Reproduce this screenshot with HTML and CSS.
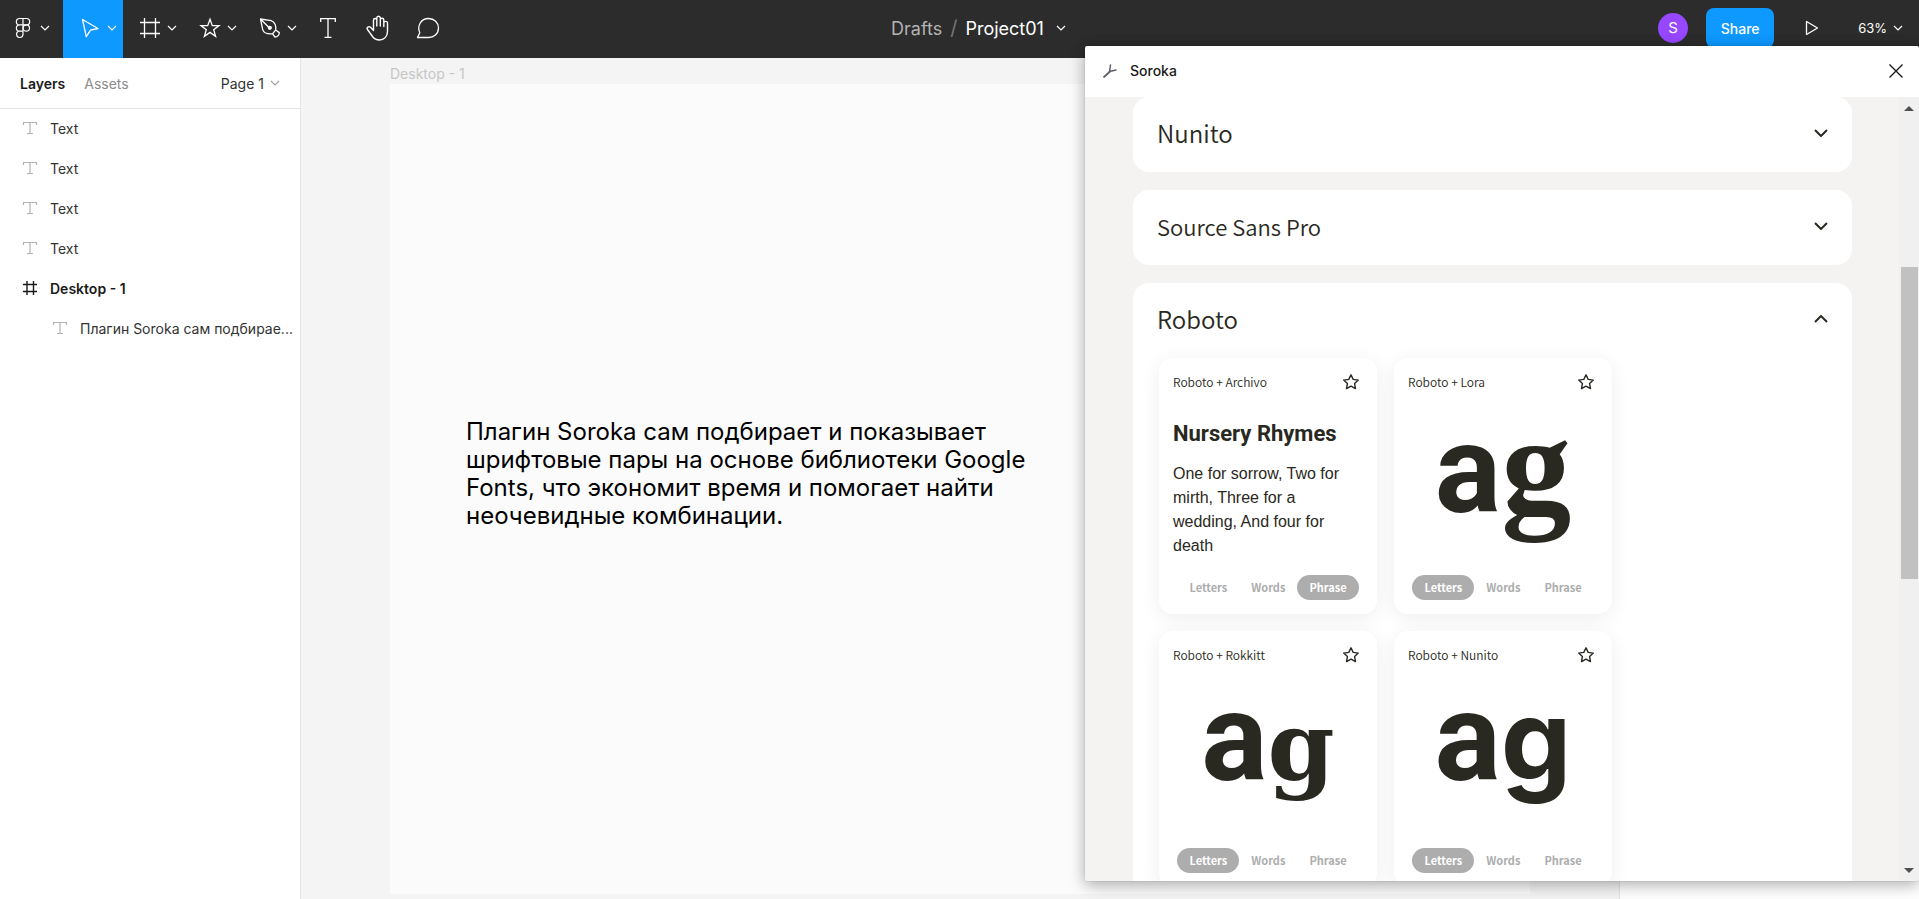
FILE: index.html
```html
<!DOCTYPE html>
<html lang="ru">
<head>
<meta charset="utf-8">
<title>Project01</title>
<link rel="stylesheet" href="styles.css">
</head>
<body>
<svg class="defs" aria-hidden="true">
  <symbol id="chev" viewBox="0 0 10 6"><path d="M1 1l4 4 4-4" fill="none" stroke="currentColor" stroke-width="1.2"/></symbol>
  <symbol id="chev-bold" viewBox="0 0 14 8"><path d="M1 1l6 6 6-6" fill="none" stroke="currentColor" stroke-width="2"/></symbol>
  <symbol id="type" viewBox="0 0 16 14"><path d="M1.500 4V1.500h13V4M8 1.500v11M5 12.500h6" fill="none" stroke="currentColor" stroke-width="1.200"/></symbol>
  <symbol id="star" viewBox="0 0 18 18"><path d="M9 1.800l2.200 4.600 5.100.7-3.700 3.500.9 5L9 13.200l-4.500 2.400.9-5-3.700-3.500 5.100-.7z" fill="none" stroke="currentColor" stroke-width="1.400" stroke-linejoin="round"/></symbol>
</svg>

<header class="toolbar">
  <nav class="tools">
    <button class="tool tool-menu" aria-label="Menu">
      <span class="tool-icon"><svg width="16" height="22" viewBox="0 0 16 22" fill="none" stroke="currentColor" stroke-width="1.200"><path d="M8 1.500H4.500a3.100 3.100 0 0 0 0 6.300H8zM8 1.500h3.500a3.100 3.100 0 0 1 0 6.300H8zM8 7.800H4.500a3.100 3.100 0 0 0 0 6.300H8zM8 14.100H4.500a3.200 3.200 0 1 0 3.500 3.200z"/><circle cx="11.300" cy="11" r="3.200"/></svg></span>
      <span class="tool-chev"><svg width="10" height="6"><use href="#chev"/></svg></span>
    </button>
    <button class="tool tool-active" aria-label="Move">
      <span class="tool-icon"><svg width="20" height="22" viewBox="0 0 20 22" fill="none" stroke="currentColor" stroke-width="1.300" stroke-linejoin="round"><path d="M2.500 2.500l15.500 9-7.500 1.700-4.200 6.500z"/></svg></span>
      <span class="tool-chev"><svg width="10" height="6"><use href="#chev"/></svg></span>
    </button>
    <button class="tool" aria-label="Frame">
      <span class="tool-icon"><svg width="22" height="22" viewBox="0 0 22 22" fill="none" stroke="currentColor" stroke-width="1.300"><path d="M5.500 1v20M16.500 1v20M1 5.500h20M1 16.500h20"/></svg></span>
      <span class="tool-chev"><svg width="10" height="6"><use href="#chev"/></svg></span>
    </button>
    <button class="tool" aria-label="Shape">
      <span class="tool-icon"><svg width="22" height="22" viewBox="0 0 22 22" fill="none" stroke="currentColor" stroke-width="1.300"><path d="M11 2.200l2.300 6.400h6.700l-5.300 4.100 1.900 6.600-5.600-3.900-5.600 3.900 1.900-6.600L2 8.600h6.700z"/></svg></span>
      <span class="tool-chev"><svg width="10" height="6"><use href="#chev"/></svg></span>
    </button>
    <button class="tool" aria-label="Pen">
      <span class="tool-icon"><svg width="22" height="22" viewBox="0 0 22 22" fill="none" stroke="currentColor" stroke-width="1.300" stroke-linejoin="round"><path d="M1.500 2l10.700 1.700c3.600 1 5.200 5.600 4.500 9.300l3.600 2.600c.3 2.200-1.900 4.300-4.300 4.400l-2.500-3.200c-4.200.4-8.600-.6-9.800-4.200zM1.500 2l8.500 8.500M16.700 13l-3.200 3.800"/><circle cx="10.800" cy="10.800" r="1.500" fill="currentColor"/></svg></span>
      <span class="tool-chev"><svg width="10" height="6"><use href="#chev"/></svg></span>
    </button>
    <button class="tool-single" aria-label="Text"><svg width="18" height="22" viewBox="0 0 18 22" fill="none" stroke="currentColor" stroke-width="1.300"><path d="M1.700 5V1.700h14.600V5M9 1.700v18.600M5.500 20.300h7"/></svg></button>
    <button class="tool-single" aria-label="Hand"><svg width="24" height="26" viewBox="0 0 24 26" fill="none" stroke="currentColor" stroke-width="1.400" stroke-linejoin="round" stroke-linecap="round"><path d="M7.500 13.500V5.200c0-2.300 3.300-2.300 3.300 0V3c0-2.400 3.500-2.400 3.500 0v2c0-2.300 3.500-2.300 3.500 0v3c0-2.200 3.700-2.200 3.700 0v8.500c0 5-3.500 8.500-8 8.500-3.300 0-5.500-1.500-7-3.500l-5-7c-1.300-2 1.500-3.800 3-2.200l3 3.200zM10.800 5v6M14.300 5v6M17.800 7v4.500"/></svg></button>
    <button class="tool-single" aria-label="Comment"><svg width="24" height="22" viewBox="0 0 24 22" fill="none" stroke="currentColor" stroke-width="1.300" stroke-linejoin="round"><path d="M1.500 20.500l2.300-4.800C.9 9.500 4.500 1.500 12.700 1.500c5.500 0 9.800 4.200 9.800 9.500 0 6-5 9.500-9.800 9.500z"/></svg></button>
  </nav>
  <div class="doc-title">
    <a class="doc-folder" href="#">Drafts</a>
    <span class="doc-slash">/</span>
    <button class="doc-name">Project01 <svg width="10" height="6"><use href="#chev"/></svg></button>
  </div>
  <div class="actions">
    <span class="avatar">S</span>
    <button class="share">Share</button>
    <button class="play" aria-label="Present"><svg width="14" height="16" viewBox="0 0 14 16" fill="none" stroke="currentColor" stroke-width="1.300" stroke-linejoin="round"><path d="M1.500 1.500l11 6.500-11 6.500z"/></svg></button>
    <button class="zoom">63% <svg width="10" height="6"><use href="#chev"/></svg></button>
  </div>
</header>

<main class="workspace">
  <aside class="left-panel">
    <div class="tabs">
      <button class="tab tab-on">Layers</button>
      <button class="tab">Assets</button>
      <button class="page">Page 1 <svg width="10" height="6"><use href="#chev"/></svg></button>
    </div>
    <ul class="layers">
      <li><svg width="16" height="14"><use href="#type"/></svg><span>Text</span></li>
      <li><svg width="16" height="14"><use href="#type"/></svg><span>Text</span></li>
      <li><svg width="16" height="14"><use href="#type"/></svg><span>Text</span></li>
      <li><svg width="16" height="14"><use href="#type"/></svg><span>Text</span></li>
      <li class="frame-layer"><svg width="16" height="14" viewBox="0 0 16 14" fill="none" stroke="currentColor" stroke-width="1.400"><path d="M5 0v14M11.500 0v14M1 3.500h14M1 10.500h14"/></svg><span>Desktop - 1</span></li>
      <li class="nested"><svg width="16" height="14"><use href="#type"/></svg><span>Плагин Soroka сам подбирае...</span></li>
    </ul>
  </aside>
  <section class="canvas">
    <div class="frame-name">Desktop - 1</div>
    <div class="frame">
      <p>Плагин Soroka сам подбирает и показывает<br>шрифтовые пары на основе библиотеки Google<br>Fonts, что экономит время и помогает найти<br>неочевидные комбинации.</p>
    </div>
  </section>
  <aside class="right-panel"></aside>
</main>

<section class="plugin" role="dialog" aria-label="Soroka">
  <header class="plugin-head">
    <svg width="16" height="16" viewBox="0 0 16 16" fill="none" stroke="#625e6e" stroke-linecap="round"><path d="M2 14l6-5.500" stroke-width="1.800"/><path d="M7.500 8.500l1-6.500M7.500 8.500l6.500-1.500" stroke-width="1.500"/></svg>
    <h1>Soroka</h1>
    <button class="close" aria-label="Close"><svg width="16" height="16" viewBox="0 0 16 16"><path d="M1.500 1.500l13 13M14.500 1.500l-13 13" stroke="currentColor" stroke-width="1.400"/></svg></button>
  </header>
  <div class="plugin-body">
    <div class="fonts">
      <article class="font"><button class="font-head">Nunito <svg width="14" height="8"><use href="#chev-bold"/></svg></button></article>
      <article class="font"><button class="font-head font-source">Source Sans Pro <svg width="14" height="8"><use href="#chev-bold"/></svg></button></article>
      <article class="font">
        <button class="font-head">Roboto <svg width="14" height="8" viewBox="0 0 14 8"><path d="M1 7l6-6 6 6" fill="none" stroke="currentColor" stroke-width="2"/></svg></button>
        <div class="pairs">
          <div class="pair">
            <div class="pair-head"><h2>Roboto + Archivo</h2><button class="fav" aria-label="Favourite"><svg width="18" height="18"><use href="#star"/></svg></button></div>
            <div class="phrase"><h3>Nursery Rhymes</h3><p>One for sorrow, Two for mirth, Three for a wedding, And four for death</p></div>
            <div class="modes"><button>Letters</button><button>Words</button><button class="on">Phrase</button></div>
          </div>
          <div class="pair">
            <div class="pair-head"><h2>Roboto + Lora</h2><button class="fav" aria-label="Favourite"><svg width="18" height="18"><use href="#star"/></svg></button></div>
            <div class="letters">a<span class="lora">g</span></div>
            <div class="modes"><button class="on">Letters</button><button>Words</button><button>Phrase</button></div>
          </div>
          <div class="pair">
            <div class="pair-head"><h2>Roboto + Rokkitt</h2><button class="fav" aria-label="Favourite"><svg width="18" height="18"><use href="#star"/></svg></button></div>
            <div class="letters">a<span class="rokkitt">g</span></div>
            <div class="modes"><button class="on">Letters</button><button>Words</button><button>Phrase</button></div>
          </div>
          <div class="pair">
            <div class="pair-head"><h2>Roboto + Nunito</h2><button class="fav" aria-label="Favourite"><svg width="18" height="18"><use href="#star"/></svg></button></div>
            <div class="letters">a<span class="nunito">g</span></div>
            <div class="modes"><button class="on">Letters</button><button>Words</button><button>Phrase</button></div>
          </div>
        </div>
      </article>
    </div>
    <div class="scrollbar">
      <svg width="10" height="5" viewBox="0 0 10 5"><path d="M0 5l5-5 5 5z" fill="#505050"/></svg>
      <div class="track"><div class="thumb"></div></div>
      <svg width="10" height="5" viewBox="0 0 10 5"><path d="M0 0l5 5 5-5z" fill="#505050"/></svg>
    </div>
  </div>
</section>
</body>
</html>
```
FILE: styles.css
```css
* { box-sizing: border-box; }
body {
  margin: 0;
  height: 100vh;
  display: flex;
  flex-direction: column;
  position: relative;
  overflow: hidden;
  font-family: Inter, sans-serif;
  font-size: 14px;
  color: #333;
}
button {
  border: 0;
  padding: 0;
  background: none;
  font: inherit;
  color: inherit;
}
h1, h2, h3, p, ul { margin: 0; padding: 0; }
svg { display: block; flex: none; }
.defs { position: absolute; width: 0; height: 0; }

/* Toolbar */
.toolbar {
  display: flex;
  flex: none;
  height: 58px;
  padding-bottom: 2px;
  background: #2c2c2c;
  color: #fff;
}
.tools { display: flex; flex: 1 1 0; margin-bottom: -2px; }
.tool {
  display: flex;
  align-items: center;
  width: 60px;
  padding: 0 0 2px 14px;
}
.tool-menu { width: 63px; padding-left: 10px; }
.tool-active { background: #0d99ff; }
.tool-icon { display: flex; justify-content: center; width: 26px; }
.tool-chev { display: flex; justify-content: center; width: 18px; }
.tool-single {
  display: flex;
  align-items: center;
  justify-content: center;
  width: 50px;
  padding-bottom: 2px;
}
.doc-title {
  display: flex;
  align-items: center;
  gap: 8px;
  padding-left: 54px;
  font-size: 18px;
}
.doc-folder { color: #b3b3b3; text-decoration: none; }
.doc-slash { color: #777; font-size: 20px; }
.doc-name { display: flex; align-items: center; gap: 12px; }
.actions {
  display: flex;
  flex: 1 1 0;
  justify-content: flex-end;
  align-items: center;
  padding-right: 16px;
}
.avatar {
  width: 30px;
  height: 30px;
  margin-right: 18px;
  border-radius: 50%;
  background: #9747ff;
  font-size: 15px;
  line-height: 30px;
  text-align: center;
}
.share {
  width: 68px;
  height: 40px;
  border-radius: 8px;
  background: #0d99ff;
  font-size: 14px;
  font-weight: 500;
}
.play { margin: 0 39px 0 31px; }
.zoom { display: flex; align-items: center; gap: 6px; font-size: 13px; }

/* Workspace */
.workspace { display: flex; flex: 1; min-height: 0; }
.left-panel {
  flex: none;
  width: 301px;
  border-right: 1px solid #e5e5e5;
  background: #fff;
}
.tabs {
  display: flex;
  align-items: center;
  gap: 19px;
  height: 51px;
  padding: 0 20px;
  border-bottom: 1px solid #e5e5e5;
}
.tab { color: #8c8c8c; }
.tab-on { color: #1a1a1a; font-weight: 600; }
.page { display: flex; align-items: center; gap: 6px; margin-left: auto; }
.page svg { color: #a0a0a0; }
.layers { list-style: none; }
.layers li {
  display: flex;
  align-items: center;
  gap: 12px;
  height: 40px;
  padding: 0 4px 2px 22px;
}
.layers svg { color: #b3b3b3; }
.layers span { white-space: nowrap; }
.layers .frame-layer { font-weight: 600; color: #1a1a1a; }
.layers .frame-layer svg { color: #1a1a1a; }
.layers .nested { padding-left: 52px; }
.canvas {
  display: flex;
  flex-direction: column;
  flex: 1;
  padding: 7px 89px 5px;
  background: #f4f4f4;
}
.frame-name { height: 19px; color: #c6c6c6; line-height: 17px; }
.frame { flex: 1; padding: 334px 76px 0; background: #fbfbfb; }
.frame p { color: #000; font-size: 24px; line-height: 28px; white-space: nowrap; }
.right-panel { flex: none; width: 300px; border-left: 1px solid #e5e5e5; background: #fff; }

/* Plugin window */
.plugin {
  position: absolute;
  top: 46px;
  right: 0;
  bottom: 18px;
  display: flex;
  flex-direction: column;
  width: 834px;
  border-radius: 2px;
  background: #fff;
  box-shadow: 0 2px 14px rgba(0, 0, 0, .15), 0 0 1px rgba(0, 0, 0, .4), 0 5px 17px rgba(0, 0, 0, .2);
  overflow: hidden;
}
.plugin-head {
  display: flex;
  align-items: center;
  flex: none;
  gap: 12px;
  height: 51px;
  padding: 0 15px 2px 17px;
  color: #1a1a1a;
}
.plugin-head h1 { font-size: 14px; font-weight: 500; }
.close { margin-left: auto; }
.plugin-body { display: flex; flex: 1; min-height: 0; background: #f4f3f1; }
.fonts {
  display: flex;
  flex-direction: column;
  flex: 1;
  gap: 18px;
  padding: 0 47px 0 48px;
  overflow: hidden;
  color: #292821;
  font-family: "Noto Sans CJK SC", sans-serif;
}
.font { flex: none; border-radius: 16px; background: #fff; }
.font-head {
  display: flex;
  align-items: center;
  justify-content: space-between;
  width: 100%;
  height: 75px;
  padding: 0 24px 4px;
  font-size: 24px;
  font-weight: 350;
}
.font-source { font-size: 22px; }
.pairs {
  display: grid;
  grid-template-columns: 218px 218px;
  gap: 17px;
  padding: 0 26px 26px;
}
.pair {
  display: flex;
  flex-direction: column;
  height: 256px;
  padding: 14px;
  border-radius: 14px;
  background: #fff;
  box-shadow: 0 4px 20px rgba(0, 0, 0, .07);
}
.pair-head {
  display: flex;
  align-items: center;
  justify-content: space-between;
  height: 20px;
  padding-right: 3px;
}
.pair-head h2 { padding-bottom: 2px; font-size: 12px; font-weight: 350; }
.phrase { flex: 1; padding-top: 28px; }
.phrase h3 { font: 700 22px/28px Roboto, sans-serif; }
.phrase p { padding-top: 14px; font: 16px/24px "Liberation Sans", sans-serif; }
.letters {
  display: flex;
  flex: 1;
  align-items: baseline;
  justify-content: center;
  min-height: 0;
  font: 700 124px/146px Roboto, sans-serif;
}
.lora { font-family: "Liberation Serif", serif; font-size: 140px; }
.rokkitt { font-family: "DejaVu Serif", serif; font-size: 96px; }
.nunito { font-family: Inter, sans-serif; font-size: 112px; }
.modes { display: flex; justify-content: center; }
.modes button {
  height: 25px;
  padding: 0 12px;
  border-radius: 13px;
  color: #adadad;
  font-size: 11px;
  font-weight: 700;
  line-height: 25px;
}
.modes .on { background: #adadad; color: #fff; }
.scrollbar {
  display: flex;
  flex-direction: column;
  align-items: center;
  flex: none;
  width: 20px;
  padding: 9px 0 8px;
  background: #f0f0f0;
}
.track { flex: 1; width: 17px; padding-top: 156px; }
.thumb { height: 312px; background: #c1c1c1; }
```
